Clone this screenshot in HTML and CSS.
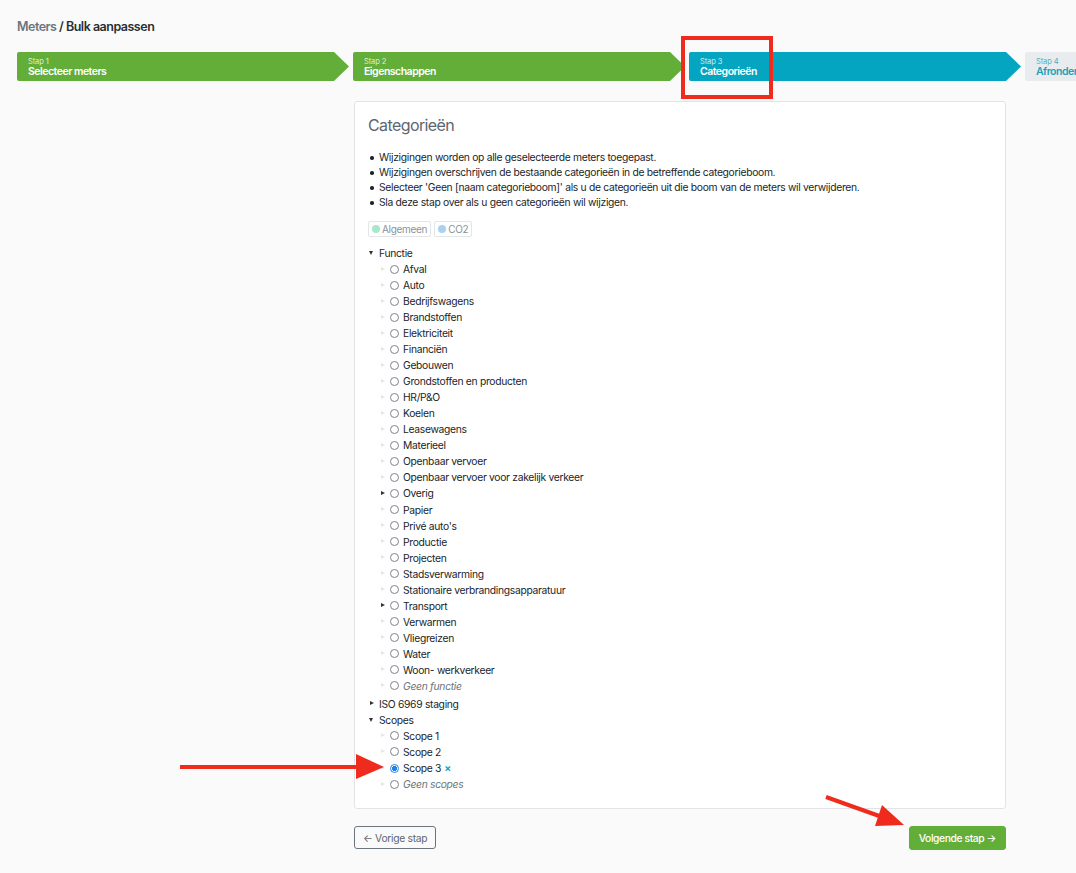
FILE: index.html
```html
<!DOCTYPE html>
<html lang="nl">
<head>
<meta charset="utf-8">
<title>Meters / Bulk aanpassen</title>
<link rel="stylesheet" href="styles.css">
</head>
<body>
<div class="page">
  <div class="breadcrumb"><span class="crumb-muted">Meters</span> / Bulk aanpassen</div>

  <div class="steps">
    <div class="step step-done"><span class="step-num">Stap 1</span><span class="step-title">Selecteer meters</span></div>
    <div class="step step-done"><span class="step-num">Stap 2</span><span class="step-title">Eigenschappen</span></div>
    <div class="step step-active"><span class="step-num">Stap 3</span><span class="step-title">Categorieën</span></div>
    <div class="step step-todo"><span class="step-num">Stap 4</span><span class="step-title">Afronden</span></div>
  </div>

  <div class="content">
    <div class="card">
      <h2 class="card-title">Categorieën</h2>
      <ul class="info-list">
        <li>Wijzigingen worden op alle geselecteerde meters toegepast.</li>
        <li>Wijzigingen overschrijven de bestaande categorieën in de betreffende categorieboom.</li>
        <li>Selecteer 'Geen [naam categorieboom]' als u de categorieën uit die boom van de meters wil verwijderen.</li>
        <li>Sla deze stap over als u geen categorieën wil wijzigen.</li>
      </ul>

      <div class="tags">
        <span class="tag"><span class="tag-dot dot-green"></span>Algemeen</span>
        <span class="tag"><span class="tag-dot dot-blue"></span>CO2</span>
      </div>

      <div class="tree">
        <div class="node">
          <div class="row"><span class="toggle"><span class="tri tri-down"></span></span>Functie</div>
          <div class="children">
            <div class="row"><span class="toggle"><span class="tri tri-leaf"></span></span><span class="radio"></span>Afval</div>
            <div class="row"><span class="toggle"><span class="tri tri-leaf"></span></span><span class="radio"></span>Auto</div>
            <div class="row"><span class="toggle"><span class="tri tri-leaf"></span></span><span class="radio"></span>Bedrijfswagens</div>
            <div class="row"><span class="toggle"><span class="tri tri-leaf"></span></span><span class="radio"></span>Brandstoffen</div>
            <div class="row"><span class="toggle"><span class="tri tri-leaf"></span></span><span class="radio"></span>Elektriciteit</div>
            <div class="row"><span class="toggle"><span class="tri tri-leaf"></span></span><span class="radio"></span>Financiën</div>
            <div class="row"><span class="toggle"><span class="tri tri-leaf"></span></span><span class="radio"></span>Gebouwen</div>
            <div class="row"><span class="toggle"><span class="tri tri-leaf"></span></span><span class="radio"></span>Grondstoffen en producten</div>
            <div class="row"><span class="toggle"><span class="tri tri-leaf"></span></span><span class="radio"></span>HR/P&amp;O</div>
            <div class="row"><span class="toggle"><span class="tri tri-leaf"></span></span><span class="radio"></span>Koelen</div>
            <div class="row"><span class="toggle"><span class="tri tri-leaf"></span></span><span class="radio"></span>Leasewagens</div>
            <div class="row"><span class="toggle"><span class="tri tri-leaf"></span></span><span class="radio"></span>Materieel</div>
            <div class="row"><span class="toggle"><span class="tri tri-leaf"></span></span><span class="radio"></span>Openbaar vervoer</div>
            <div class="row"><span class="toggle"><span class="tri tri-leaf"></span></span><span class="radio"></span>Openbaar vervoer voor zakelijk verkeer</div>
            <div class="row"><span class="toggle"><span class="tri tri-right"></span></span><span class="radio"></span>Overig</div>
            <div class="row"><span class="toggle"><span class="tri tri-leaf"></span></span><span class="radio"></span>Papier</div>
            <div class="row"><span class="toggle"><span class="tri tri-leaf"></span></span><span class="radio"></span>Privé auto's</div>
            <div class="row"><span class="toggle"><span class="tri tri-leaf"></span></span><span class="radio"></span>Productie</div>
            <div class="row"><span class="toggle"><span class="tri tri-leaf"></span></span><span class="radio"></span>Projecten</div>
            <div class="row"><span class="toggle"><span class="tri tri-leaf"></span></span><span class="radio"></span>Stadsverwarming</div>
            <div class="row"><span class="toggle"><span class="tri tri-leaf"></span></span><span class="radio"></span>Stationaire verbrandingsapparatuur</div>
            <div class="row"><span class="toggle"><span class="tri tri-right"></span></span><span class="radio"></span>Transport</div>
            <div class="row"><span class="toggle"><span class="tri tri-leaf"></span></span><span class="radio"></span>Verwarmen</div>
            <div class="row"><span class="toggle"><span class="tri tri-leaf"></span></span><span class="radio"></span>Vliegreizen</div>
            <div class="row"><span class="toggle"><span class="tri tri-leaf"></span></span><span class="radio"></span>Water</div>
            <div class="row"><span class="toggle"><span class="tri tri-leaf"></span></span><span class="radio"></span>Woon- werkverkeer</div>
            <div class="row"><span class="toggle"><span class="tri tri-leaf"></span></span><span class="radio"></span><em class="none-opt">Geen functie</em></div>
          </div>
        </div>
        <div class="node">
          <div class="row"><span class="toggle"><span class="tri tri-right"></span></span>ISO 6969 staging</div>
        </div>
        <div class="node">
          <div class="row"><span class="toggle"><span class="tri tri-down"></span></span>Scopes</div>
          <div class="children">
            <div class="row"><span class="toggle"><span class="tri tri-leaf"></span></span><span class="radio"></span>Scope 1</div>
            <div class="row"><span class="toggle"><span class="tri tri-leaf"></span></span><span class="radio"></span>Scope 2</div>
            <div class="row"><span class="toggle"><span class="tri tri-leaf"></span></span><span class="radio radio-checked"></span>Scope 3<span class="clear-x">×</span></div>
            <div class="row"><span class="toggle"><span class="tri tri-leaf"></span></span><span class="radio"></span><em class="none-opt">Geen scopes</em></div>
          </div>
        </div>
      </div>
    </div>

    <div class="actions">
      <button class="btn btn-outline">← Vorige stap</button>
      <button class="btn btn-green">Volgende stap →</button>
    </div>
  </div>
</div>

<svg class="annotations" width="1076" height="873" viewBox="0 0 1076 873" aria-hidden="true">
  <rect x="683" y="38" width="88" height="59" fill="none" stroke="#ee2b1d" stroke-width="4"/>
  <line x1="180" y1="767" x2="360" y2="767" stroke="#ee2b1d" stroke-width="4"/>
  <polygon points="356,754 384,767 356,779" fill="#ee2b1d"/>
  <line x1="826" y1="797" x2="882" y2="817" stroke="#ee2b1d" stroke-width="4"/>
  <polygon points="904,825 875,826 882,805" fill="#ee2b1d"/>
</svg>
</body>
</html>
```

FILE: styles.css
```css
* { box-sizing: border-box; }

html, body {
  margin: 0;
  padding: 0;
  background: #fafafa;
}

body {
  font-family: "Inter", "Liberation Sans", sans-serif;
  font-size: 10.3px;
  letter-spacing: -0.3px;
  color: #212529;
  position: relative;
  width: 1076px;
  min-height: 873px;
  overflow: hidden;
}

.page {
  padding: 19px 0 0 17px;
}

.breadcrumb {
  font-size: 12.5px;
  line-height: 16px;
  font-weight: 600;
  letter-spacing: -0.5px;
  color: #2b2f33;
}

.crumb-muted {
  color: #6c757d;
}

/* Stepper */
.steps {
  display: flex;
  gap: 4px;
  margin-top: 17px;
  height: 29px;
  overflow: hidden;
}

.step {
  flex: 0 0 332px;
  height: 29px;
  display: flex;
  flex-direction: column;
  padding: 6px 0 0 11px;
  border-radius: 2px 0 0 2px;
  clip-path: polygon(0 0, calc(100% - 15px) 0, 100% 50%, calc(100% - 15px) 100%, 0 100%);
  color: #fff;
}

.step-done { background: #63ad39; }
.step-active { background: #03a5c1; }
.step-todo { background: #e9ecef; color: #17a2b8; }

.step-num {
  font-size: 7.5px;
  line-height: 8px;
  letter-spacing: -0.1px;
  opacity: 0.8;
}

.step-title {
  font-size: 10.5px;
  line-height: 12px;
  font-weight: 600;
  letter-spacing: -0.5px;
}

/* Content */
.content {
  margin-left: 337px;
  width: 652px;
  margin-top: 20px;
}

.card {
  background: #fff;
  border: 1px solid #e1e4e7;
  border-radius: 3px;
  padding: 12px 13px 14px;
}

.card-title {
  margin: 0;
  font-size: 16px;
  line-height: 22px;
  font-weight: 400;
  letter-spacing: -0.6px;
  color: #5c6670;
}

.info-list {
  list-style: none;
  margin: 14px 0 0;
  padding: 0;
}

.info-list li {
  position: relative;
  padding-left: 11px;
  line-height: 15px;
}

.info-list li::before {
  content: "";
  position: absolute;
  left: 2px;
  top: 6px;
  width: 3.5px;
  height: 3.5px;
  border-radius: 50%;
  background: #212529;
}

.tags {
  display: flex;
  gap: 3px;
  margin-top: 11px;
}

.tag {
  display: inline-flex;
  align-items: center;
  height: 16px;
  padding: 0 3px;
  border: 1px solid #e3e6e9;
  border-radius: 2px;
  color: #8a9299;
  font-size: 10px;
}

.tag-dot {
  width: 8px;
  height: 8px;
  border-radius: 50%;
  margin-right: 2px;
}

.dot-green { background: #a9e7cc; }
.dot-blue { background: #a9d2f2; }

/* Tree */
.tree {
  margin-top: 8px;
}

.row {
  display: flex;
  align-items: center;
  height: 16.04px;
  white-space: nowrap;
}

.children {
  margin-left: 11px;
  margin-bottom: 2px;
}

.toggle {
  flex: 0 0 11px;
  height: 16px;
  position: relative;
}

.tri {
  position: absolute;
  width: 0;
  height: 0;
}

.tri-down {
  left: 1px;
  top: 6px;
  border-left: 2.5px solid transparent;
  border-right: 2.5px solid transparent;
  border-top: 4px solid #333;
}

.tri-right {
  left: 2px;
  top: 5.5px;
  border-top: 2.5px solid transparent;
  border-bottom: 2.5px solid transparent;
  border-left: 4px solid #333;
}

.tri-leaf {
  left: 2px;
  top: 5.5px;
  border-top: 2.5px solid transparent;
  border-bottom: 2.5px solid transparent;
  border-left: 4px solid #e4e6e8;
}

.radio {
  flex: 0 0 9px;
  width: 9px;
  height: 9px;
  border: 1px solid #7d848a;
  border-radius: 50%;
  margin-right: 4px;
  background: #fff;
}

.radio-checked {
  border-color: #1a82f0;
  background: radial-gradient(circle, #1a82f0 0 2.4px, #fff 2.6px);
}

.none-opt {
  color: #6c757d;
}

.clear-x {
  color: #17a2b8;
  font-weight: 700;
  margin-left: 3px;
}

/* Actions */
.actions {
  display: flex;
  justify-content: space-between;
  margin-top: 17px;
}

.btn {
  font-family: inherit;
  font-size: 10.3px;
  letter-spacing: -0.3px;
  height: 24px;
  padding: 0 8px;
  border-radius: 3px;
  cursor: pointer;
}

.btn-outline {
  background: transparent;
  border: 1px solid #6c757d;
  color: #5c6670;
  height: 23px;
}

.btn-green {
  background: #63ad39;
  border: 1px solid #63ad39;
  color: #fff;
  font-weight: 500;
  letter-spacing: -0.4px;
  padding: 0 9px;
}

/* Annotations overlay */
.annotations {
  position: absolute;
  top: 0;
  left: 0;
  pointer-events: none;
}
```
